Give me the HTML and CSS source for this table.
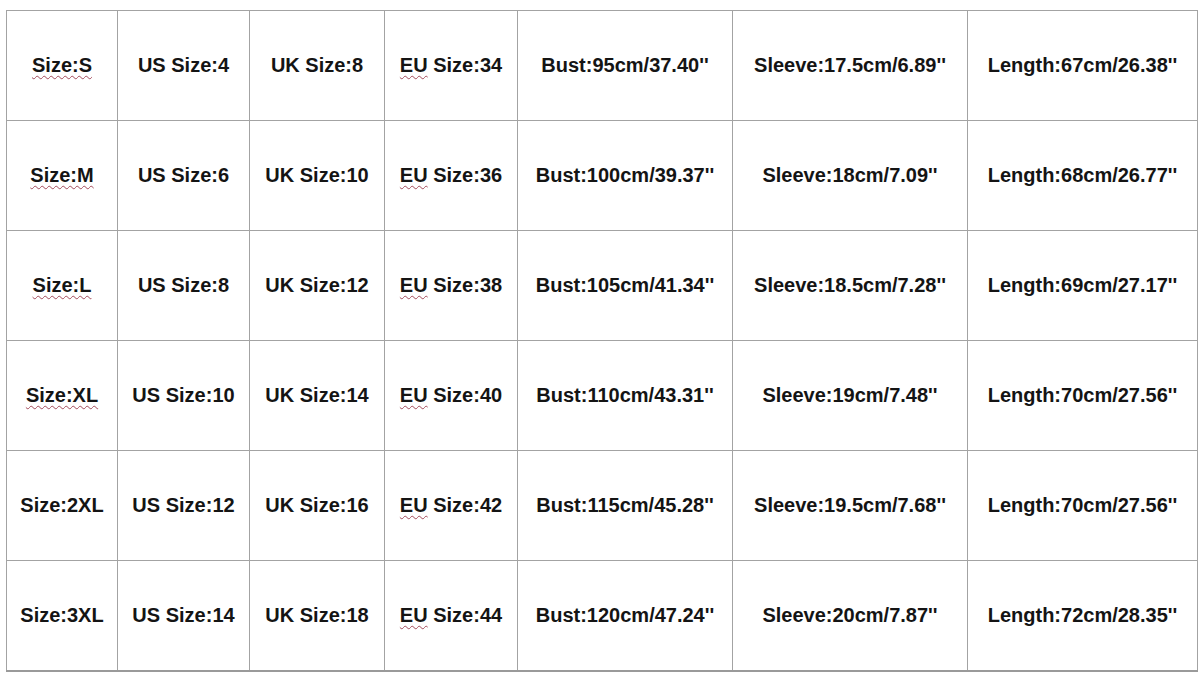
FILE: index.html
```html
<!DOCTYPE html>
<html>
<head>
<meta charset="utf-8">
<link rel="stylesheet" href="styles.css">
</head>
<body>
<table class="chart">
<colgroup>
<col class="c1"><col class="c2"><col class="c3"><col class="c4"><col class="c5"><col class="c6"><col class="c7">
</colgroup>
<tr><td><span class="sq">Size:S</span></td><td>US Size:4</td><td>UK Size:8</td><td><span class="sq">EU</span> Size:34</td><td>Bust:95cm/37.40''</td><td>Sleeve:17.5cm/6.89''</td><td>Length:67cm/26.38''</td></tr>
<tr><td><span class="sq">Size:M</span></td><td>US Size:6</td><td>UK Size:10</td><td><span class="sq">EU</span> Size:36</td><td>Bust:100cm/39.37''</td><td>Sleeve:18cm/7.09''</td><td>Length:68cm/26.77''</td></tr>
<tr><td><span class="sq">Size:L</span></td><td>US Size:8</td><td>UK Size:12</td><td><span class="sq">EU</span> Size:38</td><td>Bust:105cm/41.34''</td><td>Sleeve:18.5cm/7.28''</td><td>Length:69cm/27.17''</td></tr>
<tr><td><span class="sq">Size:XL</span></td><td>US Size:10</td><td>UK Size:14</td><td><span class="sq">EU</span> Size:40</td><td>Bust:110cm/43.31''</td><td>Sleeve:19cm/7.48''</td><td>Length:70cm/27.56''</td></tr>
<tr><td>Size:2XL</td><td>US Size:12</td><td>UK Size:16</td><td><span class="sq">EU</span> Size:42</td><td>Bust:115cm/45.28''</td><td>Sleeve:19.5cm/7.68''</td><td>Length:70cm/27.56''</td></tr>
<tr><td>Size:3XL</td><td>US Size:14</td><td>UK Size:18</td><td><span class="sq">EU</span> Size:44</td><td>Bust:120cm/47.24''</td><td>Sleeve:20cm/7.87''</td><td>Length:72cm/28.35''</td></tr>
</table>
</body>
</html>
```
FILE: styles.css
```css
html, body {
  margin: 0;
  padding: 0;
  background: #ffffff;
}
body {
  padding: 10px 0 0 6px;
  font-family: "Liberation Sans", Arial, sans-serif;
}
.chart {
  border-collapse: collapse;
  table-layout: fixed;
  width: 1191px;
}
.c1 { width: 111px; }
.c2 { width: 132px; }
.c3 { width: 135px; }
.c4 { width: 133px; }
.c5 { width: 215px; }
.c6 { width: 235px; }
.c7 { width: 230px; }
.chart td {
  border: 1px solid #a3a3a3;
  height: 109px;
  padding: 0;
  text-align: center;
  vertical-align: middle;
  font-size: 20px;
  font-weight: bold;
  color: #141414;
  white-space: nowrap;
}
.chart tr:last-child td {
  border-bottom: 2px solid #9a9a9a;
}
.sq {
  text-decoration: underline wavy #a34a5a;
  text-decoration-thickness: 1px;
  text-underline-offset: 3px;
}
```
